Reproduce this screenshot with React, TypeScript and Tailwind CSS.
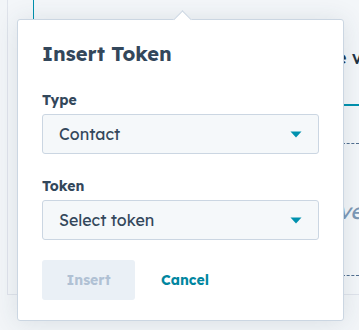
import React from 'react';

function Caret() {
  return (
    <svg width="12" height="7" viewBox="0 0 12 7" className="shrink-0">
      <path d="M0.5 0.5 L11.5 0.5 L6 6.5 Z" fill="#0091ae" />
    </svg>
  );
}

function SelectBox({ value }: { value: string }) {
  return (
    <div className="flex h-[40px] items-center justify-between rounded-[3px] border border-[#cbd6e2] bg-[#f5f8fa] px-[16px]">
      <span className="text-[16px] text-[#33475b]">{value}</span>
      <Caret />
    </div>
  );
}

function Field({ label, value }: { label: string; value: string }) {
  return (
    <div className="flex flex-col gap-[4px]">
      <div className="text-[14px] font-bold leading-[20px] text-[#33475b]">{label}</div>
      <SelectBox value={value} />
    </div>
  );
}

export default function App() {
  return (
    <div
      className="relative h-[330px] w-[359px] overflow-hidden bg-[#f2f5f8]"
      style={{ fontFamily: '"Lexend Deca", Inter, "Noto Sans", sans-serif' }}
    >
      {/* page behind the popover */}
      <div className="ml-[7px] flex h-[295px] border-b border-l border-[#dfe3eb] bg-[#f3f6f9]">
        <div className="ml-[25px] h-[20px] w-px bg-[#0091ae]" />
        <div className="ml-auto flex w-[31px] flex-col">
          <div className="mt-[46px] ml-[8px] whitespace-nowrap text-[18px] font-medium leading-[24px] text-[#213343]">e v</div>
          <div className="mt-[34px] h-[2px] bg-[#0091ae]" />
          <div className="mt-[37px] border-t border-dashed border-[#516f90]" />
          <div className="mt-[54px] ml-[10px] whitespace-nowrap text-[22px] italic leading-[26px] text-[#7c98b6]">ve</div>
          <div className="mt-[51px] border-t border-dashed border-[#516f90]" />
        </div>
      </div>

      {/* popover */}
      <div className="absolute left-[17px] top-[19px] w-[327px] rounded-[3px] border border-[#cbd6e2] bg-white shadow-[0_1px_24px_0_rgba(45,62,80,0.12)]">
        <div className="absolute -top-[7px] left-[158px] h-[13px] w-[13px] rotate-45 border-l border-t border-[#cbd6e2] bg-white" />
        <div className="relative flex flex-col px-[24px] pb-[20px] pt-[20px]">
          <h2 className="text-[20px] font-bold leading-[28px] text-[#33475b]">Insert Token</h2>
          <div className="mt-[22px] flex flex-col gap-[22px]">
            <Field label="Type" value="Contact" />
            <Field label="Token" value="Select token" />
          </div>
          <div className="mt-[20px] flex items-center gap-[26px]">
            <button className="h-[40px] w-[93px] rounded-[3px] bg-[#eaf0f6] text-[14px] font-bold text-[#b0c1d4]">
              Insert
            </button>
            <button className="text-[14px] font-bold text-[#0086a0]">Cancel</button>
          </div>
        </div>
      </div>
    </div>
  );
}
